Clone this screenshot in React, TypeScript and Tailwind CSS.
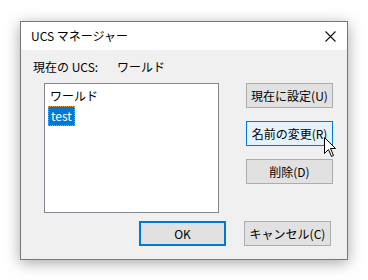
import React from 'react';

const font = { fontFamily: '"Noto Sans CJK JP", "Noto Sans", sans-serif' };

const Btn: React.FC<{ label: string; variant?: 'normal' | 'hover' | 'default' }> = ({ label, variant = 'normal' }) => {
    const cls =
        variant === 'hover'
            ? 'border border-[#0078d7] bg-[#e5f1fb]'
            : variant === 'default'
                ? 'border-2 border-[#0078d7] bg-[#e1e1e1]'
                : 'border border-[#adadad] bg-[#e1e1e1]';
    return (
        <div className={`w-[87px] h-[25px] flex items-center justify-center text-[12px] leading-[14px] text-black ${cls}`}>
            {label}
        </div>
    );
};

const App: React.FC = () => {
    return (
        <div className="w-[368px] h-[280px] bg-white pt-[21px] pl-[20px]" style={font}>
            <div className="relative w-[328px] h-[239px] border border-[#777777] bg-[#f0f0f0] shadow-[0_3px_14px_rgba(0,0,0,0.35)] flex flex-col">
                {/* Title bar */}
                <div className="h-[28px] bg-white flex items-center justify-between pl-[10px] pr-[10px]">
                    <span className="text-[12px] leading-[14px] text-black">UCS マネージャー</span>
                    <svg width="11" height="11" viewBox="0 0 11 11" className="mr-[1px]">
                        <path d="M0.5 0.5 L10.5 10.5 M10.5 0.5 L0.5 10.5" stroke="#111" strokeWidth="1.1" />
                    </svg>
                </div>

                {/* Current UCS */}
                <div className="flex items-center h-[16px] mt-[9px] pl-[12px] text-[12px] leading-[16px] text-black">
                    <span className="w-[84px]">現在の UCS:</span>
                    <span>ワールド</span>
                </div>

                {/* List + side buttons */}
                <div className="flex mt-[8px] pl-[23px]">
                    <div className="w-[175px] h-[130px] border border-[#828790] bg-white pt-[2px] pl-[3px]">
                        <div className="h-[20px] flex items-center pl-[2px] text-[12px] leading-[14px] text-black">ワールド</div>
                        <div className="h-[20px] flex items-center">
                            <span className="h-[20px] flex items-center px-[2px] bg-[#0078d7] text-white text-[12px] leading-[14px] border border-dotted border-[#e99a3c]">
                                test
                            </span>
                        </div>
                    </div>
                    <div className="flex flex-col gap-[13px] ml-[27px]">
                        <Btn label="現在に設定(U)" />
                        <Btn label="名前の変更(R)" variant="hover" />
                        <Btn label="削除(D)" />
                    </div>
                </div>

                {/* Bottom buttons */}
                <div className="flex mt-[8px] pl-[118px] gap-[18px]">
                    <Btn label="OK" variant="default" />
                    <Btn label="キャンセル(C)" />
                </div>

                {/* Mouse cursor */}
                <svg width="13" height="21" viewBox="0 0 13 21" className="absolute left-[303px] top-[115px]">
                    <path
                        d="M0.5 0.5 L0.5 16.5 L4.5 12.5 L7.5 19.5 L9.5 18.5 L6.5 11.5 L11.5 11.5 Z"
                        fill="white"
                        stroke="black"
                        strokeWidth="1"
                        strokeLinejoin="miter"
                    />
                </svg>
            </div>
        </div>
    );
};

export default App;
